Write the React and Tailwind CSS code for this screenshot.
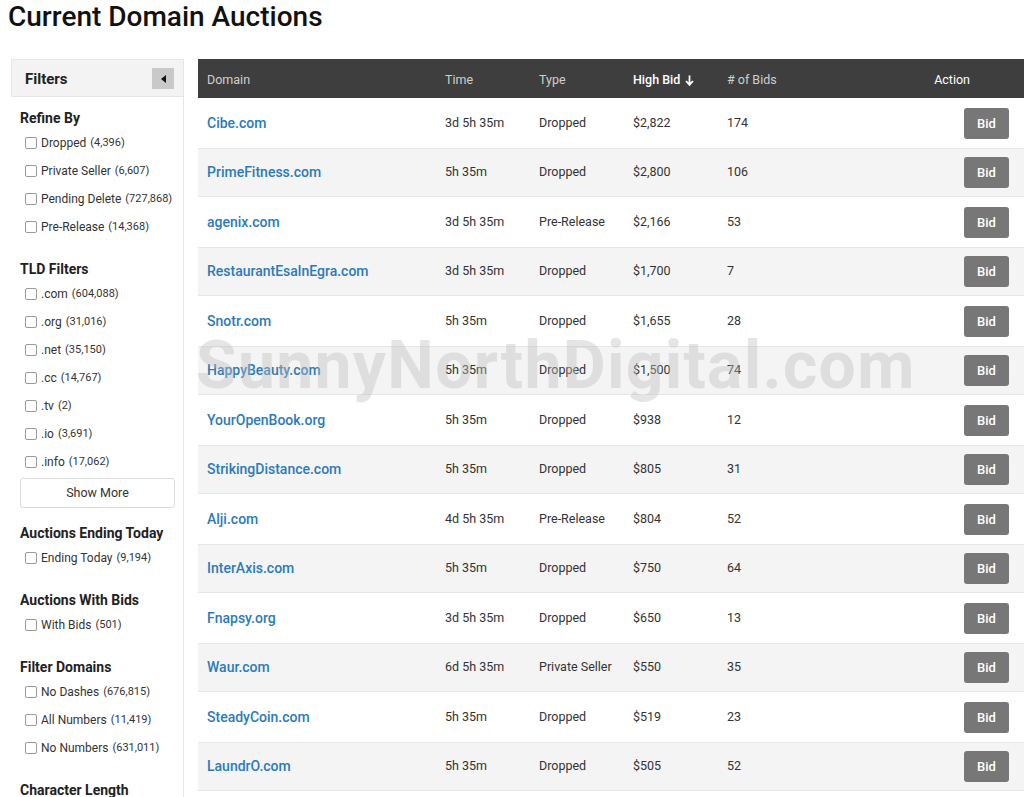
import React from 'react';

const refine = [
  ['Dropped', '4,396'],
  ['Private Seller', '6,607'],
  ['Pending Delete', '727,868'],
  ['Pre-Release', '14,368'],
];

const tlds = [
  ['.com', '604,088'],
  ['.org', '31,016'],
  ['.net', '35,150'],
  ['.cc', '14,767'],
  ['.tv', '2'],
  ['.io', '3,691'],
  ['.info', '17,062'],
];

const domainFilters = [
  ['No Dashes', '676,815'],
  ['All Numbers', '11,419'],
  ['No Numbers', '631,011'],
];

const auctions = [
  ['Cibe.com', '3d 5h 35m', 'Dropped', '$2,822', '174'],
  ['PrimeFitness.com', '5h 35m', 'Dropped', '$2,800', '106'],
  ['agenix.com', '3d 5h 35m', 'Pre-Release', '$2,166', '53'],
  ['RestaurantEsalnEgra.com', '3d 5h 35m', 'Dropped', '$1,700', '7'],
  ['Snotr.com', '5h 35m', 'Dropped', '$1,655', '28'],
  ['HappyBeauty.com', '5h 35m', 'Dropped', '$1,500', '74'],
  ['YourOpenBook.org', '5h 35m', 'Dropped', '$938', '12'],
  ['StrikingDistance.com', '5h 35m', 'Dropped', '$805', '31'],
  ['Alji.com', '4d 5h 35m', 'Pre-Release', '$804', '52'],
  ['InterAxis.com', '5h 35m', 'Dropped', '$750', '64'],
  ['Fnapsy.org', '3d 5h 35m', 'Dropped', '$650', '13'],
  ['Waur.com', '6d 5h 35m', 'Private Seller', '$550', '35'],
  ['SteadyCoin.com', '5h 35m', 'Dropped', '$519', '23'],
  ['LaundrO.com', '5h 35m', 'Dropped', '$505', '52'],
];

const Check = ({ label, count }) => (
  <label className="flex items-center h-[28px] pl-[5px] text-[12px] text-[#333]">
    <span className="w-[12px] h-[12px] border border-[#9a9a9a] rounded-[2px] bg-white mr-[4px] shrink-0" />
    <span>{label}</span>
    <span className="ml-[4px] text-[11px]">({count})</span>
  </label>
);

const Heading = ({ children, className = '' }) => (
  <h4 className={`h-[20px] leading-[20px] text-[14px] font-bold text-[#222] ${className}`}>{children}</h4>
);

const Sidebar = () => (
  <aside className="w-[173px] shrink-0">
    <div className="h-[38px] bg-[#f3f3f3] border border-[#e6e6e6] flex items-center justify-between pl-[13px] pr-[9px] pt-[1px]">
      <span className="text-[15px] font-bold text-[#222] pt-[2px]">Filters</span>
      <button className="w-[22px] h-[21px] bg-[#c9c9c9] flex items-center justify-center">
        <span className="w-0 h-0 border-y-[4px] border-y-transparent border-r-[5px] border-r-[#111]" />
      </button>
    </div>
    <div className="border-r border-[#e6e6e6] pl-[9px] pr-[8px] pt-[11px] pb-4">
      <Heading className="mb-[1px]">Refine By</Heading>
      {refine.map(([l, c]) => <Check key={l} label={l} count={c} />)}

      <Heading className="mt-[18px] mb-[1px]">TLD Filters</Heading>
      {tlds.map(([l, c]) => <Check key={l} label={l} count={c} />)}
      <button className="mt-[2px] w-full h-[30px] border border-[#dcdcdc] rounded-[3px] bg-white text-[12.5px] text-[#333]">
        Show More
      </button>

      <Heading className="mt-[15px] mb-[1px]">Auctions Ending Today</Heading>
      <Check label="Ending Today" count="9,194" />

      <Heading className="mt-[18px] mb-[1px]">Auctions With Bids</Heading>
      <Check label="With Bids" count="501" />

      <Heading className="mt-[18px] mb-[1px]">Filter Domains</Heading>
      {domainFilters.map(([l, c]) => <Check key={l} label={l} count={c} />)}

      <Heading className="mt-[18px]">Character Length</Heading>
    </div>
  </aside>
);

const cols = 'grid grid-cols-[238px_94px_94px_94px_1fr] items-center pl-[9px]';

const AuctionTable = () => (
  <div className="flex-1 relative">
    <div className={`${cols} h-[39px] pt-[3px] bg-[#3e3e3e] text-[12.5px] text-[#cfcfcf]`}>
      <span>Domain</span>
      <span>Time</span>
      <span>Type</span>
      <span className="text-white font-medium flex items-center gap-[5px]">
        High Bid
        <svg width="9" height="11" viewBox="0 0 9 11" fill="none" stroke="white" strokeWidth="1.8">
          <path d="M4.5 0.5v9M1 6l3.5 3.8L8 6" />
        </svg>
      </span>
      <span className="flex justify-between pr-[54px]">
        <span># of Bids</span>
        <span className="text-white">Action</span>
      </span>
    </div>
    {auctions.map(([domain, time, type, bid, bids], i) => (
      <div
        key={domain}
        className={`${cols} h-[49.5px] pt-[1px] text-[12.5px] text-[#333] ${i % 2 === 1 ? 'bg-[#f4f4f4] border-y border-[#e6e6e6]' : 'bg-white'}`}
      >
        <a className="text-[14px] font-medium text-[#2c7bb8]">{domain}</a>
        <span>{time}</span>
        <span>{type}</span>
        <span>{bid}</span>
        <span className="flex items-center justify-between pr-[15px]">
          <span>{bids}</span>
          <button className="w-[45px] h-[31px] rounded-[3px] bg-[#777777] text-white text-[13px] font-medium">Bid</button>
        </span>
      </div>
    ))}
    <div className="pointer-events-none absolute left-[-2px] top-[274px] text-[66px] font-bold leading-none tracking-[1.3px] text-[#bdbdbd]/40 select-none whitespace-nowrap">
      SunnyNorthDigital.com
    </div>
  </div>
);

export default function App() {
  return (
    <div className="bg-white w-[1024px] min-h-[797px] overflow-hidden font-['Roboto','Liberation_Sans',sans-serif]">
      <h1 className="pl-[8px] text-[28px] leading-[33px] font-medium text-[#111]">Current Domain Auctions</h1>
      <div className="flex mt-[26px] pl-[11px] gap-[14px]">
        <Sidebar />
        <AuctionTable />
      </div>
    </div>
  );
}
